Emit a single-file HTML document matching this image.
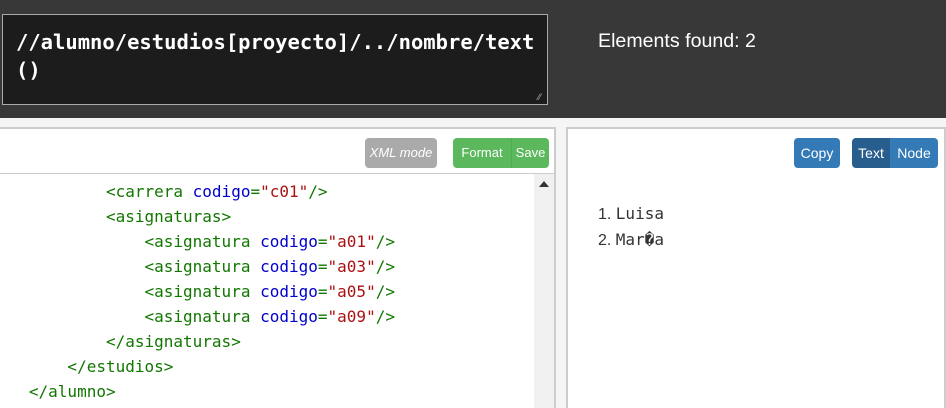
<!DOCTYPE html>
<html><head><style>
html,body{margin:0;width:946px;height:408px;overflow:hidden}
body{background:#f5f5f5;font-family:"Liberation Sans",sans-serif;position:relative}
.top{position:absolute;left:0;top:0;width:946px;height:118px;background:#383838}
.ta{position:absolute;left:2px;top:14px;width:546px;height:91px;background:#1c1c1c;border:1px solid #aaa;color:#fff;font-family:"DejaVu Sans Mono",monospace;font-size:20.5px;line-height:28px;padding:0 0 0 13px;box-sizing:border-box;padding-top:13px;font-weight:bold;overflow:hidden}
.found{position:absolute;left:598px;top:30px;color:#fff;font-size:19.6px}
.lp{position:absolute;left:-2px;top:127px;width:558px;height:281px;border:2px solid #ccc;border-bottom:0;background:#fff;box-sizing:border-box;overflow:hidden}
.rp{position:absolute;left:566px;top:127px;width:380px;height:281px;border:2px solid #ccc;border-bottom:0;background:#fff;box-sizing:border-box;overflow:hidden}
.btn{position:absolute;height:30px;line-height:30px;border-radius:4px;color:#fff;font-size:13px;text-align:center}
.code{position:absolute;left:0;top:44px;width:554px;height:240px;border-top:1px solid #ccc;font-family:"DejaVu Sans Mono",monospace;font-size:16px;line-height:25px;white-space:pre;padding-top:5px;box-sizing:border-box}
.t{color:#170}.a{color:#00c}.v{color:#a11}
.sb{position:absolute;right:0;top:0;width:20px;height:240px;background:#f0f0f0}
</style></head><body>
<div class="top"></div>
<div class="ta">//alumno/estudios[proyecto]/../nombre/text<br>()</div>
<div style="position:absolute;top:92px;color:#aaa;font-size:9px;left:538px">⁄⁄</div>
<div class="found">Elements found: 2</div>
<div class="lp">
<div class="btn" style="left:365px;top:9px;width:72px;background:#aaa;font-style:italic">XML mode</div>
<div class="btn" style="left:453px;top:9px;width:58px;background:#5cb85c;border-radius:4px 0 0 4px;border-right:1px solid #4cae4c">Format</div>
<div class="btn" style="left:512px;top:9px;width:37px;background:#5cb85c;border-radius:0 4px 4px 0">Save</div>
<div class="code"><div class="sb"><div style="position:absolute;left:5px;top:7px;width:0;height:0;border-left:5px solid transparent;border-right:5px solid transparent;border-bottom:6px solid #333"></div></div><span class="t">           &lt;carrera </span><span class="a">codigo</span><span class="t">=</span><span class="v">"c01"</span><span class="t">/&gt;</span>
<span class="t">           &lt;asignaturas&gt;</span>
<span class="t">               &lt;asignatura </span><span class="a">codigo</span><span class="t">=</span><span class="v">"a01"</span><span class="t">/&gt;</span>
<span class="t">               &lt;asignatura </span><span class="a">codigo</span><span class="t">=</span><span class="v">"a03"</span><span class="t">/&gt;</span>
<span class="t">               &lt;asignatura </span><span class="a">codigo</span><span class="t">=</span><span class="v">"a05"</span><span class="t">/&gt;</span>
<span class="t">               &lt;asignatura </span><span class="a">codigo</span><span class="t">=</span><span class="v">"a09"</span><span class="t">/&gt;</span>
<span class="t">           &lt;/asignaturas&gt;</span>
<span class="t">       &lt;/estudios&gt;</span>
<span class="t">   &lt;/alumno&gt;</span></div>
</div>
<div class="rp">
<div class="btn" style="left:226px;top:9px;width:46px;background:#337ab7;font-size:14px">Copy</div>
<div class="btn" style="left:284px;top:9px;width:38px;background:#285e8e;border-radius:4px 0 0 4px;font-size:14px">Text</div>
<div class="btn" style="left:322px;top:9px;width:48px;background:#337ab7;border-radius:0 4px 4px 0;font-size:14px">Node</div>
<div style="position:absolute;left:30px;top:72px;font-size:16px;line-height:25px;color:#333">
<div>1. <span style="font-family:'DejaVu Sans Mono',monospace;font-size:16px">Luisa</span></div>
<div>2. <span style="font-family:'DejaVu Sans Mono',monospace;font-size:16px">Mar�a</span></div>
</div>
</div>
</body></html>
